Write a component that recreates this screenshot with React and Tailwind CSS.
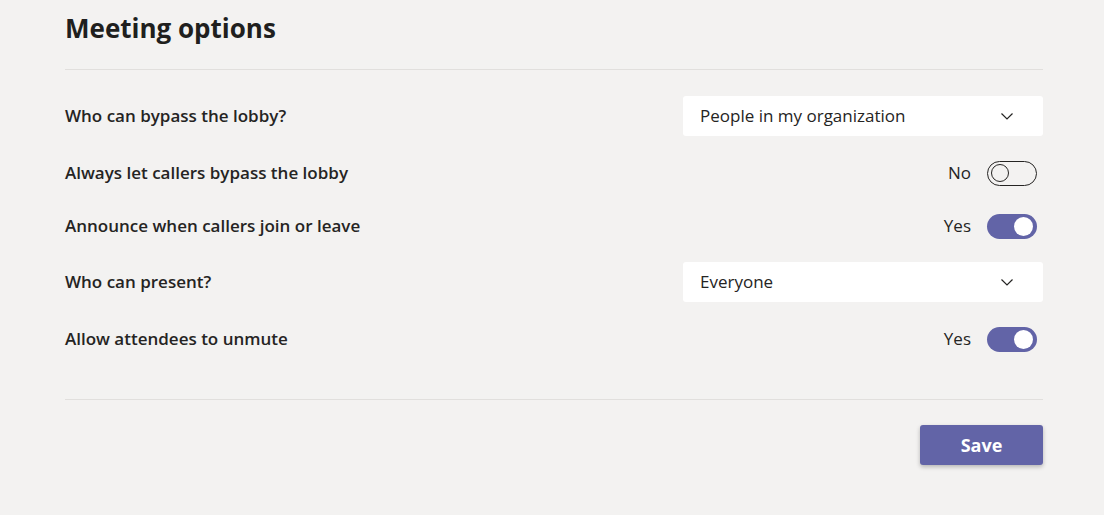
import React from "react";

const font = { fontFamily: '"Open Sans", "Noto Sans", sans-serif' };

function Chevron() {
  return (
    <svg width="16" height="16" viewBox="0 0 16 16" fill="none">
      <path d="M2.5 5.5 L8 11 L13.5 5.5" stroke="#252423" strokeWidth="1.2" />
    </svg>
  );
}

function Dropdown({ value }) {
  return (
    <div className="w-[360px] h-10 bg-white rounded-[3px] flex items-center justify-between pl-[17px] pr-[28px]">
      <span className="text-[17px] text-[#252423]">{value}</span>
      <Chevron />
    </div>
  );
}

function Toggle({ on, label }) {
  return (
    <div className="flex items-center gap-[16px] mr-[6px]">
      <span className="text-[17px] text-[#252423]">{label}</span>
      {on ? (
        <div className="w-[50px] h-[25px] rounded-full bg-[#6264a7] flex items-center justify-end pr-[4px]">
          <div className="w-[19px] h-[19px] rounded-full bg-white" />
        </div>
      ) : (
        <div className="w-[50px] h-[25px] rounded-full border-[1.5px] border-[#252423] flex items-center pl-[2.5px]">
          <div className="w-[18px] h-[18px] rounded-full border-[1.5px] border-[#252423]" />
        </div>
      )}
    </div>
  );
}

function Row({ label, h, children }) {
  return (
    <div className={`flex items-center justify-between ${h}`}>
      <span className="text-[17px] font-semibold text-[#252423]">{label}</span>
      {children}
    </div>
  );
}

export default function App() {
  return (
    <div className="w-[1104px] h-[515px] bg-[#f3f2f1] overflow-hidden" style={font}>
      <div className="ml-[65px] w-[978px]">
        <h1 className="pt-[9px] h-[70px] text-[26px] font-bold text-[#201f1e] leading-[38px] border-b border-[#e1dfdd]">
          Meeting options
        </h1>
        <div className="pt-[26px] flex flex-col gap-5 pb-[43px] border-b border-[#e1dfdd]">
          <Row label="Who can bypass the lobby?" h="h-10">
            <Dropdown value="People in my organization" />
          </Row>
          <Row label="Always let callers bypass the lobby" h="h-[34px]">
            <Toggle on={false} label="No" />
          </Row>
          <Row label="Announce when callers join or leave" h="h-8">
            <Toggle on label="Yes" />
          </Row>
          <Row label="Who can present?" h="h-10">
            <Dropdown value="Everyone" />
          </Row>
          <Row label="Allow attendees to unmute" h="h-[34px]">
            <Toggle on label="Yes" />
          </Row>
        </div>
        <div className="flex justify-end pt-[25px]">
          <button className="w-[123px] h-10 bg-[#6264a7] text-white text-[18px] font-bold rounded-[3px] shadow-[0_2px_4px_rgba(0,0,0,0.25)]">
            Save
          </button>
        </div>
      </div>
    </div>
  );
}
